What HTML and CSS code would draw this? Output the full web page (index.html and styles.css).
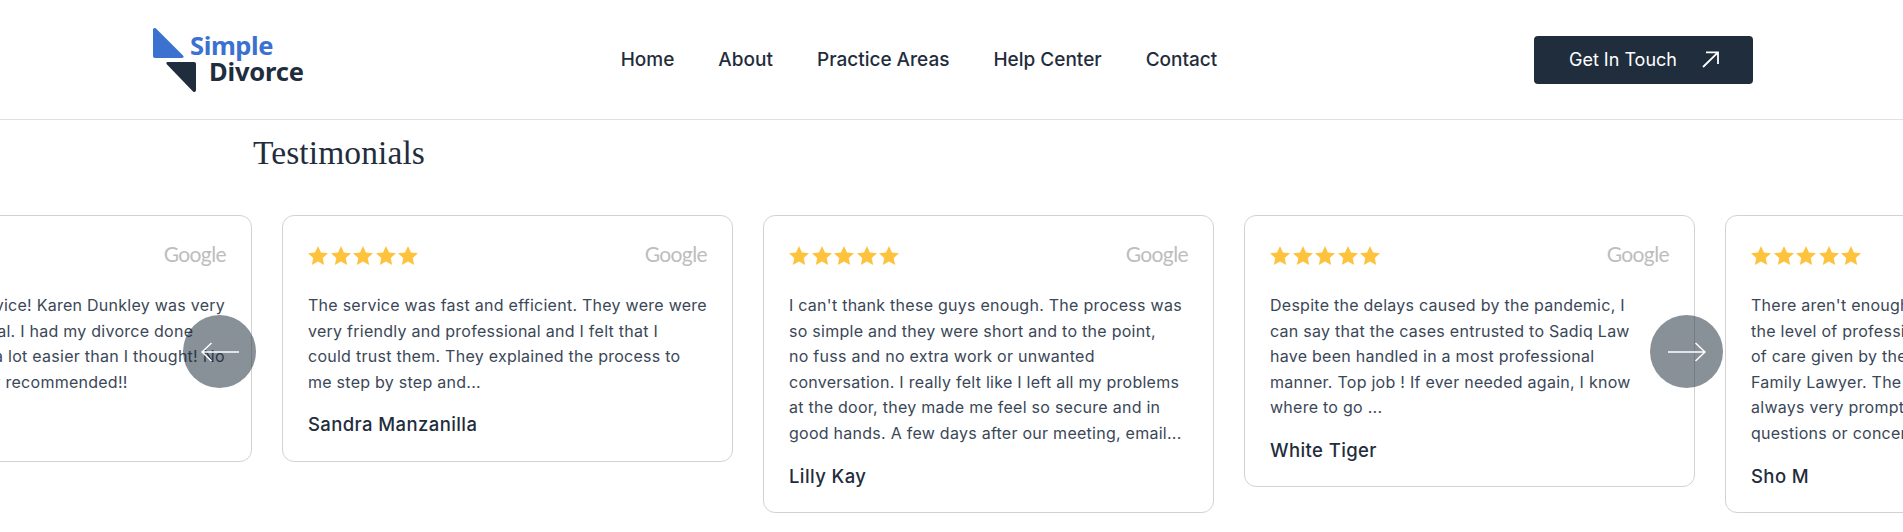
FILE: index.html
```html
<!DOCTYPE html>
<html lang="en">
<head>
<meta charset="utf-8">
<title>Simple Divorce - Testimonials</title>
<link rel="stylesheet" href="styles.css">
</head>
<body>
<svg class="defs" width="0" height="0" aria-hidden="true">
  <symbol id="star" viewBox="0.8 1.2 22.4 21.2"><path d="M12 1.2l3.3 7.200 7.900.9-5.900 5.300 1.600 7.800L12 18.500l-6.900 3.900 1.600-7.800L.8 9.300l7.900-.9z"/></symbol>
</svg>
<header class="site-header">
  <a class="logo" href="#">
    <svg class="logo-mark" viewBox="0 0 44 64" width="44" height="64" aria-hidden="true">
      <path class="logo-blue" d="M0 2c0-2 2-2.600 3-1.400l27 27c1.300 1.300.5 2.400-1 2.400H2c-1.200 0-2-.8-2-2z"/>
      <path class="logo-dark" d="M43 36v26c0 2-2 2.600-3 1.500L14 36.500c-1.300-1.300-.5-2.500 1-2.500h26c1.200 0 2 .8 2 2z"/>
    </svg>
    <span class="logo-text"><span class="logo-simple">Simple</span><span class="logo-divorce">Divorce</span></span>
  </a>
  <nav class="main-nav">
    <a href="#">Home</a>
    <a href="#">About</a>
    <a href="#">Practice Areas</a>
    <a href="#">Help Center</a>
    <a href="#">Contact</a>
  </nav>
  <a class="cta" href="#">
    <span>Get In Touch</span>
    <svg viewBox="0 0 17 17" width="17" height="17" aria-hidden="true"><path d="M1 16L16 1.300M4 1.300H16V13"/></svg>
  </a>
</header>
<main>
  <h2 class="section-title">Testimonials</h2>
  <section class="carousel">
    <div class="track">
      <article class="card">
        <div class="card-top"><div class="stars"><svg><use href="#star"/></svg><svg><use href="#star"/></svg><svg><use href="#star"/></svg><svg><use href="#star"/></svg><svg><use href="#star"/></svg></div><span class="google">Google</span></div>
        <p class="quote">What a wonderful service! Karen Dunkley was very<br>caring and professional. I had my divorce done<br>quickly and it was all a lot easier than I thought! No<br>hassle at all. So highly recommended!!</p>
        <h3 class="author">Lisa M</h3>
      </article>
      <article class="card">
        <div class="card-top"><div class="stars"><svg><use href="#star"/></svg><svg><use href="#star"/></svg><svg><use href="#star"/></svg><svg><use href="#star"/></svg><svg><use href="#star"/></svg></div><span class="google">Google</span></div>
        <p class="quote">The service was fast and efficient. They were were<br>very friendly and professional and I felt that I<br>could trust them. They explained the process to<br>me step by step and...</p>
        <h3 class="author">Sandra Manzanilla</h3>
      </article>
      <article class="card">
        <div class="card-top"><div class="stars"><svg><use href="#star"/></svg><svg><use href="#star"/></svg><svg><use href="#star"/></svg><svg><use href="#star"/></svg><svg><use href="#star"/></svg></div><span class="google">Google</span></div>
        <p class="quote">I can't thank these guys enough. The process was<br>so simple and they were short and to the point,<br>no fuss and no extra work or unwanted<br>conversation. I really felt like I left all my problems<br>at the door, they made me feel so secure and in<br>good hands. A few days after our meeting, email...</p>
        <h3 class="author">Lilly Kay</h3>
      </article>
      <article class="card">
        <div class="card-top"><div class="stars"><svg><use href="#star"/></svg><svg><use href="#star"/></svg><svg><use href="#star"/></svg><svg><use href="#star"/></svg><svg><use href="#star"/></svg></div><span class="google">Google</span></div>
        <p class="quote">Despite the delays caused by the pandemic, I<br>can say that the cases entrusted to Sadiq Law<br>have been handled in a most professional<br>manner. Top job ! If ever needed again, I know<br>where to go ...</p>
        <h3 class="author">White Tiger</h3>
      </article>
      <article class="card">
        <div class="card-top"><div class="stars"><svg><use href="#star"/></svg><svg><use href="#star"/></svg><svg><use href="#star"/></svg><svg><use href="#star"/></svg><svg><use href="#star"/></svg></div><span class="google">Google</span></div>
        <p class="quote">There aren't enough words to describe<br>the level of professionalism and the quality<br>of care given by the team at this<br>Family Lawyer. The staff were<br>always very prompt to answer any<br>questions or concerns I had...</p>
        <h3 class="author">Sho M</h3>
      </article>
    </div>
    <button class="arrow arrow-prev" aria-label="Previous">
      <svg viewBox="0 0 38 20" width="38" height="20" aria-hidden="true"><path d="M38 10H1M10.500 1L1 10l9.500 9"/></svg>
    </button>
    <button class="arrow arrow-next" aria-label="Next">
      <svg viewBox="0 0 38 20" width="38" height="20" aria-hidden="true"><path d="M0 10h37M27.500 1L37 10l-9.500 9"/></svg>
    </button>
  </section>
</main>
</body>
</html>
```

FILE: styles.css
```css
* { box-sizing: border-box; }
html, body { margin: 0; padding: 0; height: 100%; overflow: hidden; background: #fff; }
body { font-family: "Inter", "Liberation Sans", sans-serif; color: #1f2d3d; }
a { text-decoration: none; color: inherit; }
.defs { position: absolute; }

.site-header {
  display: flex;
  align-items: center;
  justify-content: space-between;
  height: 120px;
  padding: 0 150px 0 153px;
  border-bottom: 1px solid #e0e0e0;
}
.logo { display: flex; width: 151px; height: 64px; position: relative; }
.logo-mark { flex: none; }
.logo-blue { fill: #3b71cf; }
.logo-dark { fill: #1f2d3d; }
.logo-text {
  display: flex;
  flex-direction: column;
  margin-left: -7px;
  font-family: "Noto Sans", sans-serif;
  font-weight: 700;
  font-size: 25.500px;
  line-height: 27px;
  padding-top: 4px;
  letter-spacing: -0.4px;
}
.logo-simple { color: #3b71cf; }
.logo-divorce { color: #1f2d3d; padding-left: 19px; margin-top: -1px; letter-spacing: -0.2px; }

.main-nav { display: flex; gap: 44px; font-size: 19px; font-weight: 500; color: #1f2d3d; }

.cta {
  display: flex;
  align-items: center;
  gap: 25px;
  width: 219px;
  height: 48px;
  padding: 0 0 0 35px;
  background: #1f2d3d;
  border-radius: 4px;
  color: #fff;
  font-size: 18px;
  font-weight: 400;
}
.cta svg { fill: none; stroke: #fff; stroke-width: 1.800; }

.section-title {
  margin: 0;
  padding: 13px 0 0 253px;
  font-family: "Liberation Serif", serif;
  font-weight: 400;
  font-size: 33.500px;
  letter-spacing: 0.1px;
  line-height: 40px;
  color: #1f2d3d;
}

.carousel { position: relative; margin-top: 42px; height: 300px; overflow: hidden; }
.track { display: flex; align-items: flex-start; gap: 30px; margin-left: -199px; }
.card {
  flex: none;
  width: 451px;
  padding: 24px 25px 22.500px;
  background: #fff;
  border: 1px solid #d2d2d2;
  border-radius: 12px;
}
.card-top { display: flex; align-items: center; justify-content: space-between; height: 30px; }
.stars { display: flex; gap: 2.500px; }
.stars svg { width: 20px; height: 19px; fill: #fdc33d; }
.google {
  font-family: "Lato", sans-serif;
  font-size: 21px;
  line-height: 28px;
  margin-bottom: 2px;
  color: #bdbdbd;
  letter-spacing: -0.6px;
}
.quote {
  margin: 23px 0 0;
  font-family: "Inter", sans-serif;
  font-size: 16px;
  letter-spacing: 0.26px;
  line-height: 25.600px;
  color: #3a4757;
  white-space: nowrap;
}
.author {
  margin: 16px 0 0;
  font-family: "Inter", sans-serif;
  font-size: 18.500px;
  letter-spacing: 0.4px;
  line-height: 27px;
  font-weight: 500;
  color: #1f2d3d;
}
.arrow {
  position: absolute;
  top: 100px;
  display: flex;
  align-items: center;
  justify-content: center;
  width: 73px;
  height: 73px;
  padding: 0;
  border: 0;
  border-radius: 50%;
  background: rgba(31, 45, 61, 0.53);
}
.arrow svg { fill: none; stroke: #fff; stroke-width: 1.500; }
.arrow-prev { left: 183px; }
.arrow-next { right: 180px; }
```
